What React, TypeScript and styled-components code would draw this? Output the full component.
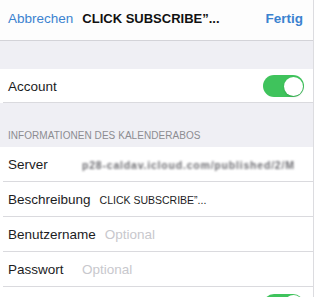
import styled, { createGlobalStyle } from 'styled-components'

const GlobalStyle = createGlobalStyle`
    html, body {
        margin: 0;
        padding: 0;
        background: #ffffff;
    }
    body {
        font-family: 'Liberation Sans', Arial, sans-serif;
        -webkit-font-smoothing: antialiased;
    }
`

const Screen = styled.div`
    width: 313px;
    height: 297px;
    overflow: hidden;
    background: #efeff4;
    border-right: 1px solid #dcdce0;
    color: #1c1c1e;
`

const NavBar = styled.nav`
    height: 41px;
    display: flex;
    align-items: center;
    padding: 0 10px 3px 8px;
    box-sizing: border-box;
    background: #fdfdfd;
    border-bottom: 1px solid #d3d3d8;
`

const NavButton = styled.span<{ $bold?: boolean }>`
    color: #3b82d0;
    font-size: 13.5px;
    font-weight: ${p => (p.$bold ? 700 : 400)};
`

const NavTitle = styled.span`
    flex: 1;
    margin-left: 9px;
    font-size: 13px;
    font-weight: 700;
    color: #111;
`

const Spacer = styled.div<{ $h: number }>`
    height: ${p => p.$h}px;
`

const SectionHeader = styled.div`
    height: 44px;
    box-sizing: border-box;
    padding: 0 0 6px 8px;
    display: flex;
    align-items: flex-end;
    font-size: 10px;
    color: #8c8c91;
    letter-spacing: 0.05px;
`

const Group = styled.div`
    background: #ffffff;
`

const Row = styled.div<{ $h?: number }>`
    position: relative;
    height: ${p => p.$h ?? 35}px;
    display: flex;
    align-items: center;
    padding: 0 9px 0 8px;
    box-sizing: border-box;

    &::after {
        content: '';
        position: absolute;
        left: 3px;
        right: 0;
        bottom: 0;
        height: 1px;
        background: #dadade;
    }
`

const Label = styled.span`
    flex: none;
    min-width: 65px;
    margin-right: 9px;
    font-size: 13.5px;
    color: #1c1c1e;
`

const Value = styled.span<{ $small?: boolean }>`
    font-size: ${p => (p.$small ? '10.5px' : '13.5px')};
    color: #1c1c1e;
    white-space: nowrap;
`

const Placeholder = styled.span`
    font-size: 13.5px;
    color: #c8c8cd;
`

const BlurredValue = styled.span`
    font-size: 10.5px;
    font-weight: 700;
    color: #6f6f74;
    filter: blur(1.1px);
    white-space: nowrap;
    letter-spacing: 0.8px;
`

const Grow = styled.div`
    flex: 1;
`

const Switch = styled.div<{ $on?: boolean }>`
    width: 41px;
    height: 22px;
    border-radius: 11px;
    background: ${p => (p.$on ? '#3fc35c' : '#e5e5ea')};
    display: flex;
    align-items: center;
    justify-content: ${p => (p.$on ? 'flex-end' : 'flex-start')};
    padding: 0 1.5px;
    box-sizing: border-box;
`

const Knob = styled.div`
    width: 19px;
    height: 19px;
    border-radius: 50%;
    background: #ffffff;
    box-shadow: 0 1px 2px rgba(0, 0, 0, 0.15);
`

const Toggle: React.FC<{ on?: boolean }> = ({ on }) => (
    <Switch $on={on}>
        <Knob />
    </Switch>
)

export default function App() {
    return (
        <>
            <GlobalStyle />
            <Screen>
                <NavBar>
                    <NavButton>Abbrechen</NavButton>
                    <NavTitle>CLICK SUBSCRIBE”...</NavTitle>
                    <NavButton $bold>Fertig</NavButton>
                </NavBar>
                <Spacer $h={28} />
                <Group>
                    <Row $h={34}>
                        <Value>Account</Value>
                        <Grow />
                        <Toggle on />
                    </Row>
                </Group>
                <SectionHeader>INFORMATIONEN DES KALENDERABOS</SectionHeader>
                <Group>
                    <Row>
                        <Label>Server</Label>
                        <BlurredValue>p28-caldav.icloud.com/published/2/M</BlurredValue>
                    </Row>
                    <Row>
                        <Label>Beschreibung</Label>
                        <Value $small>CLICK SUBSCRIBE”...</Value>
                    </Row>
                    <Row>
                        <Label>Benutzername</Label>
                        <Placeholder>Optional</Placeholder>
                    </Row>
                    <Row>
                        <Label>Passwort</Label>
                        <Placeholder>Optional</Placeholder>
                    </Row>
                    <Row>
                        <Grow />
                        <Toggle on />
                    </Row>
                </Group>
            </Screen>
        </>
    )
}
